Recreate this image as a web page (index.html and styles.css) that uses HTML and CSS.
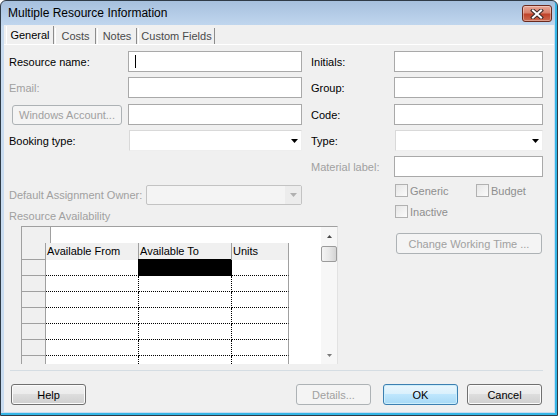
FILE: index.html
```html
<!DOCTYPE html>
<html>
<head>
<meta charset="utf-8">
<title>Multiple Resource Information</title>
<link rel="stylesheet" href="styles.css">
</head>
<body>
<div class="window">
  <div class="titlebar">
    <span class="title">Multiple Resource Information</span>
    <div class="close">
      <svg width="14" height="10" viewBox="0 0 14 10">
        <path d="M3 1.5 L11 8.5 M11 1.5 L3 8.5" stroke="#3b2a28" stroke-width="4" stroke-linecap="square" fill="none"/>
        <path d="M3 1.5 L11 8.5 M11 1.5 L3 8.5" stroke="#ffffff" stroke-width="2" stroke-linecap="square" fill="none"/>
      </svg>
    </div>
  </div>
  <div class="body">
    <div class="tabs">
      <div class="tab active t-general">General</div>
      <div class="tab t-costs">Costs</div>
      <div class="tab t-notes">Notes</div>
      <div class="tab t-custom">Custom Fields</div>
    </div>

    <div class="form">
      <div class="lbl r1 c1">Resource name:</div>
      <div class="field r1 c2"><span class="caret"></span></div>
      <div class="lbl r1 c4">Initials:</div>
      <div class="field r1 c5"></div>

      <div class="lbl dis r2 c1">Email:</div>
      <div class="field r2 c2"></div>
      <div class="lbl r2 c4">Group:</div>
      <div class="field r2 c5"></div>

      <div class="btn disabled winacct r3 c1">Windows Account...</div>
      <div class="field r3 c2"></div>
      <div class="lbl r3 c4">Code:</div>
      <div class="field r3 c5"></div>

      <div class="lbl r4 c1">Booking type:</div>
      <div class="select r4 c2 w-left">
        <svg width="7" height="4" viewBox="0 0 7 4"><polygon points="0,0 7,0 3.5,4" fill="#000"/></svg>
      </div>
      <div class="lbl r4 c4">Type:</div>
      <div class="select r4 c5 w-right">
        <svg width="7" height="4" viewBox="0 0 7 4"><polygon points="0,0 7,0 3.5,4" fill="#000"/></svg>
      </div>

      <div class="lbl dis r5 c4">Material label:</div>
      <div class="field r5 c5"></div>

      <div class="dao r6 c12">
        <span class="dis">Default Assignment Owner:</span>
        <div class="dsel">
          <div class="dbtn">
            <svg width="7" height="4" viewBox="0 0 7 4"><polygon points="0,0 7,0 3.5,4" fill="#b0b0b0"/></svg>
          </div>
        </div>
      </div>
      <div class="checks r6 c5">
        <div class="chk w81"><span class="box"></span><span class="chk-text">Generic</span></div>
        <div class="chk"><span class="box"></span><span class="chk-text">Budget</span></div>
      </div>

      <div class="ra dis r7 c12">Resource Availability</div>
      <div class="checks r7 c5 inactive">
        <div class="chk"><span class="box"></span><span class="chk-text">Inactive</span></div>
      </div>

      <div class="sheet r8 c13">
        <div class="sgrid">
          <div class="editbar"><div class="eb-head"></div></div>

          <div class="rh"></div>
          <div class="hd">Available From</div>
          <div class="hd">Available To</div>
          <div class="hd hd-last">Units</div>
          <div class="fill"></div>

          <div class="rh"></div><div class="dc"></div><div class="dc sel"></div><div class="dc dc-last"></div><div class="fill"></div>
          <div class="rh"></div><div class="dc"></div><div class="dc"></div><div class="dc dc-last"></div><div class="fill"></div>
          <div class="rh"></div><div class="dc"></div><div class="dc"></div><div class="dc dc-last"></div><div class="fill"></div>
          <div class="rh"></div><div class="dc"></div><div class="dc"></div><div class="dc dc-last"></div><div class="fill"></div>
          <div class="rh"></div><div class="dc"></div><div class="dc"></div><div class="dc dc-last"></div><div class="fill"></div>
          <div class="rh"></div><div class="dc"></div><div class="dc"></div><div class="dc dc-last"></div><div class="fill"></div>
          <div class="rh end"></div><div class="dc end"></div><div class="dc end"></div><div class="dc dc-last end"></div><div class="fill"></div>
        </div>
        <div class="vscroll">
          <div class="sb-up">
            <svg width="5" height="3" viewBox="0 0 5 3"><polygon points="0,3 2.5,0 5,3" fill="#4a4a4a"/></svg>
          </div>
          <div class="thumb"></div>
          <div class="sb-space"></div>
          <div class="sb-down">
            <svg width="5" height="3" viewBox="0 0 5 3"><polygon points="0,0 5,0 2.5,3" fill="#7a7a7a"/></svg>
          </div>
        </div>
      </div>

      <div class="btn disabled cwt r8 c5">Change Working Time ...</div>
    </div>

    <div class="sep"></div>

    <div class="buttons">
      <div class="btn help">Help</div>
      <div class="btn disabled details">Details...</div>
      <div class="btn default ok">OK</div>
      <div class="btn cancel">Cancel</div>
    </div>
  </div>
</div>
</body>
</html>
```

FILE: styles.css
```css
* { box-sizing: border-box; }
html, body { margin: 0; padding: 0; }
body {
  width: 558px;
  height: 416px;
  overflow: hidden;
  background: #ffffff;
  font-family: "Liberation Sans", Arial, sans-serif;
  font-size: 11px;
  color: #000;
}

.window {
  width: 558px;
  height: 416px;
  border: 1px solid #2f3b47;
  border-radius: 6px 6px 0 0;
  padding: 0 3px 3px;
  display: flex;
  flex-direction: column;
  background: linear-gradient(to bottom, #a6c0dd 0px, #b3cbe6 12px, #c0d6ee 24px, #c9dcf0 25px, #c9dcf0 100%);
  box-shadow: inset -2px -2px 0 #35b6e6;
}

.titlebar {
  height: 24px;
  flex: none;
  display: flex;
  justify-content: space-between;
  align-items: flex-start;
  padding-left: 4px;
}
.title {
  font-size: 12px;
  line-height: 14px;
  margin-top: 5px;
  color: #000;
}
.close {
  width: 30px;
  height: 17px;
  margin-top: 4px;
  margin-right: 2px;
  border: 1px solid #6b2a1e;
  border-radius: 3px;
  background: linear-gradient(to bottom, #e8a696 0%, #d8816c 45%, #c0432a 55%, #cc6a50 100%);
  box-shadow: inset 0 0 0 1px rgba(255, 255, 255, 0.35);
  display: flex;
  align-items: center;
  justify-content: center;
}
.close svg { display: block; }

.body {
  flex: 1;
  background: #f0f0f0;
  display: flex;
  flex-direction: column;
}

/* tabs */
.tabs {
  flex: none;
  height: 19px;
  margin-top: 1px;
  padding-left: 2px;
  display: flex;
  align-items: flex-end;
  gap: 1px;
  border-bottom: 1px solid #ffffff;
}
.tab {
  height: 16px;
  line-height: 15px;
  padding-top: 1px;
  text-align: center;
  white-space: nowrap;
  color: #4a4a4a;
  border-left: 1px solid #ffffff;
  border-right: 1px solid #8c8c8c;
}
.tab.active { height: 18px; line-height: 17px; color: #000; }
.t-general { width: 48px; }
.t-costs { width: 41px; }
.t-notes { width: 40px; }
.t-custom { width: 77px; }

/* form grid */
.form {
  flex: none;
  display: grid;
  grid-template-columns: 119px 174px 9px 83px 149px;
  grid-template-rows: 26px 27px 26px 26px 27px 22px 21px 138px;
  align-items: start;
  margin-top: 6px;
  padding-left: 5px;
}
.r1 { grid-row: 1; } .r2 { grid-row: 2; } .r3 { grid-row: 3; } .r4 { grid-row: 4; }
.r5 { grid-row: 5; } .r6 { grid-row: 6; } .r7 { grid-row: 7; } .r8 { grid-row: 8; }
.c1 { grid-column: 1; } .c2 { grid-column: 2; } .c4 { grid-column: 4; } .c5 { grid-column: 5; }
.c12 { grid-column: 1 / 3; } .c13 { grid-column: 1 / 4; }

.lbl {
  display: flex;
  align-items: center;
  height: 21px;
  white-space: nowrap;
}
.dis { color: #a0a0a0; }

.field {
  height: 21px;
  background: #ffffff;
  border: 1px solid #a9a9a9;
}
.caret {
  display: block;
  width: 1px;
  height: 13px;
  background: #000;
  margin: 3px 0 0 6px;
}
.select {
  height: 21px;
  margin-left: 1px;
  background: #ffffff;
  border: 1px solid;
  border-color: #d9d9d9 #eeeeee #eeeeee #d9d9d9;
  display: flex;
  align-items: center;
  justify-content: flex-end;
  padding-right: 3px;
}
.select svg { display: block; }

.winacct {
  width: 110px;
  height: 20px !important;
  margin-left: 3px;
  margin-top: 1px;
}

.dao {
  display: flex;
  align-items: center;
  justify-content: space-between;
  height: 20px;
  margin-top: 2px;
  white-space: nowrap;
}
.dsel {
  width: 156px;
  height: 20px;
  border: 1px solid #c3c3c3;
  border-radius: 2px;
  background: #f4f4f4;
  display: flex;
  justify-content: flex-end;
}
.dbtn {
  width: 16px;
  height: 100%;
  background: #ececec;
  display: flex;
  align-items: center;
  justify-content: center;
}
.dbtn svg { display: block; }

.checks {
  display: flex;
  align-items: center;
  height: 13px;
  margin-top: 1px;
  padding-left: 1px;
}
.inactive { margin-top: 0; }
.chk {
  display: flex;
  align-items: center;
  gap: 2px;
}
.w81 { width: 81px; }
.box {
  display: block;
  width: 13px;
  height: 13px;
  border: 1px solid #b1b1b1;
  background: linear-gradient(135deg, #e6e6e6, #fbfbfb);
}
.chk-text { color: #8e8e8e; white-space: nowrap; }

.ra { align-self: center; white-space: nowrap; }

/* resource availability sheet */
.sheet {
  margin-left: 12px;
  width: 317px;
  height: 138px;
  display: flex;
  background: #ffffff;
  border-top: 1px solid #a0a0a0;
  border-left: 1px solid #a0a0a0;
  border-right: 1px solid #e2e2e2;
}
.sgrid {
  width: 299px;
  display: grid;
  grid-template-columns: 24px 93px 93px 57px 32px;
  grid-template-rows: 16px 17px repeat(6, 16px) 8px;
}
.editbar {
  grid-column: 1 / -1;
  display: flex;
}
.eb-head {
  width: 29px;
  background: #f0f0f0;
  border-right: 1px solid #a0a0a0;
}
.rh {
  background: #f0f0f0;
  border-right: 1px solid #a0a0a0;
  border-bottom: 1px solid #a0a0a0;
}
.hd {
  background: #f0f0f0;
  border-right: 1px solid #a0a0a0;
  line-height: 17px;
  padding-left: 1px;
  white-space: nowrap;
  overflow: hidden;
}
.dc {
  border-right: 1px dotted #000;
  border-bottom: 1px dotted #000;
}
.dc-last { border-right: 1px solid #a0a0a0; }
.end { border-bottom: none; }
.sel {
  background: #000;
  border-color: #000;
  border-style: solid;
  box-shadow: -1px -1px 0 0 #000;
}
.fill { background: #ffffff; }

.vscroll {
  width: 16px;
  background: #f7f7f7;
  display: flex;
  flex-direction: column;
}
.sb-up {
  height: 18px;
  display: flex;
  align-items: center;
  justify-content: center;
}
.sb-up svg, .sb-down svg { display: block; }
.thumb {
  height: 16px;
  margin-top: 1px;
  border: 1px solid #9b9b9b;
  border-radius: 2px;
  background: linear-gradient(to right, #f4f4f4 0%, #e8e8e8 50%, #d4d4d4 100%);
}
.sb-space { flex: 1; }
.sb-down {
  height: 17px;
  display: flex;
  align-items: center;
  justify-content: center;
}

.cwt {
  width: 146px;
  margin-left: 2px;
  margin-top: 7px;
}

/* buttons */
.btn {
  height: 21px;
  border: 1px solid #707070;
  border-radius: 3px;
  background: linear-gradient(to bottom, #f2f2f2 0%, #ebebeb 49%, #dddddd 50%, #cfcfcf 100%);
  box-shadow: inset 0 0 0 1px #fbfbfb;
  display: flex;
  align-items: center;
  justify-content: center;
  white-space: nowrap;
}
.btn.disabled {
  border-color: #adb2b5;
  background: #f4f4f4;
  color: #a0a0a0;
  box-shadow: none;
}
.btn.default {
  border-color: #3c7fb1;
  background: linear-gradient(to bottom, #eaf6fd 0%, #d9f0fc 49%, #bee6fd 50%, #a7d9f5 100%);
  box-shadow: inset 0 0 0 1px #cdeefb;
}

.sep {
  flex: none;
  width: 533px;
  height: 1px;
  margin: 6px 0 0 6px;
  background: #d5dde3;
}

.buttons {
  flex: none;
  display: flex;
  margin-top: 13px;
  padding: 0 12px 0 7px;
}
.buttons .btn { width: 75px; }
.details { margin-left: auto; margin-right: 12px; }
.ok { margin-right: 9px; }
```
